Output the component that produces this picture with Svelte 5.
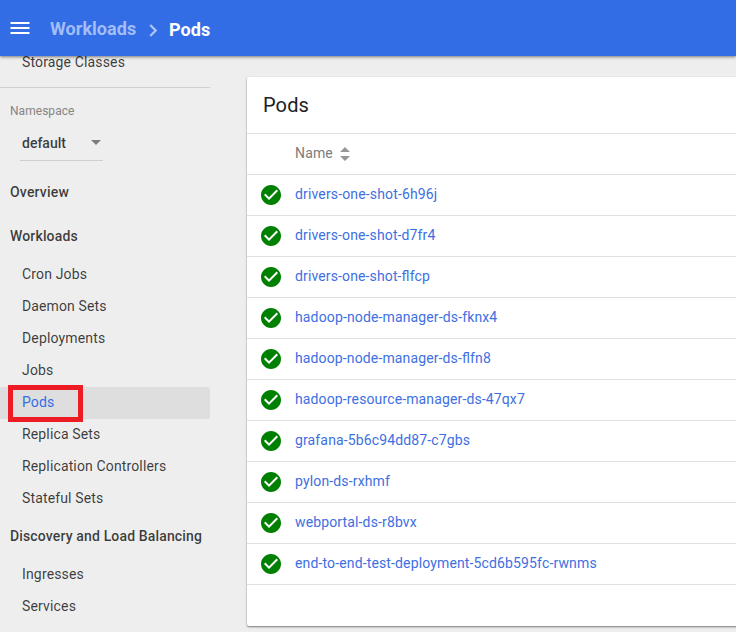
<script>
  const workloads = [
    { label: 'Cron Jobs', ls: 0.16 },
    { label: 'Daemon Sets', ls: 0.12 },
    { label: 'Deployments', ls: 0.16 },
    { label: 'Jobs', ls: 0.16 },
    { label: 'Pods', ls: 0.1 },
    { label: 'Replica Sets', ls: 0.14 },
    { label: 'Replication Controllers', ls: 0.14 },
    { label: 'Stateful Sets', ls: 0.14 }
  ];
  const discovery = [
    { label: 'Ingresses', ls: 0.16 },
    { label: 'Services', ls: 0.16 }
  ];
  const pods = [
    { name: 'drivers-one-shot-6h96j', ls: 0.15 },
    { name: 'drivers-one-shot-d7fr4', ls: 0.13 },
    { name: 'drivers-one-shot-flfcp', ls: 0.13 },
    { name: 'hadoop-node-manager-ds-fknx4', ls: 0.14 },
    { name: 'hadoop-node-manager-ds-flfn8', ls: 0.13 },
    { name: 'hadoop-resource-manager-ds-47qx7', ls: 0.13 },
    { name: 'grafana-5b6c94dd87-c7gbs', ls: 0.14 },
    { name: 'pylon-ds-rxhmf', ls: 0.15 },
    { name: 'webportal-ds-r8bvx', ls: 0.14 },
    { name: 'end-to-end-test-deployment-5cd6b595fc-rwnms', ls: 0.14 }
  ];
</script>

<div class="app">
  <header>
    <svg class="menu" width="20" height="14" viewBox="0 0 20 14"><path d="M.5 0h19v2H.5zM.5 5h19v2H.5zM.5 10h19v2H.5z" fill="#fff" /></svg>
    <span class="crumb">Workloads</span>
    <svg class="chev" width="9" height="13" viewBox="0 0 9 13"><path d="M1.2 1 6.7 6.500l-5.500 5.500" fill="none" stroke="#adc5f7" stroke-width="2.300" /></svg>
    <span class="here">Pods</span>
  </header>
  <div class="body">
    <nav>
      <div class="item storage"><span>Storage Classes</span></div>
      <div class="namespace">
        <div class="label">Namespace</div>
        <div class="select"><span>default</span><i></i></div>
      </div>
      <div class="group overview"><span>Overview</span></div>
      <div class="group works"><span>Workloads</span></div>
      {#each workloads as w}
        <div class="item" class:active={w.label === 'Pods'}><span style="letter-spacing:{w.ls}px">{w.label}</span></div>
      {/each}
      <div class="group disc"><span>Discovery and Load Balancing</span></div>
      {#each discovery as w}
        <div class="item"><span style="letter-spacing:{w.ls}px">{w.label}</span></div>
      {/each}
    </nav>
    <main>
      <section>
        <h1>Pods</h1>
        <div class="row head">
          <span>Name</span>
          <svg width="10" height="14" viewBox="0 0 10 14"><path d="M0 5 5 0l5 5zM0 9h10l-5 5z" fill="#979797" /></svg>
        </div>
        {#each pods as p}
          <div class="row">
            <svg class="ok" width="20" height="20" viewBox="2 2 20 20"><path d="M12 2C6.48 2 2 6.48 2 12s4.480 10 10 10 10-4.480 10-10S17.520 2 12 2zm-2 15l-5-5 1.410-1.410L10 14.170l7.590-7.590L19 8l-9 9z" fill="#008000" /></svg>
            <a href="#pod" style="letter-spacing:{p.ls}px">{p.name}</a>
          </div>
        {/each}
      </section>
    </main>
  </div>
</div>

<style>
  :global(body) { margin: 0; overflow: hidden; }
  .app { width: 736px; height: 632px; overflow: hidden; background: #eee; font-family: Roboto, sans-serif; font-size: 14px; color: rgba(0, 0, 0, 0.76); display: flex; flex-direction: column; }
  header { height: 56px; flex: none; background: #326de6; display: flex; align-items: center; box-sizing: border-box; padding: 0 10px; box-shadow: 0 1px 3px rgba(0, 0, 0, 0.5); position: relative; z-index: 1; font-size: 18px; line-height: 24px; font-weight: 700; }
  .menu { margin-top: 2px; }
  .crumb { margin: 2px 0 0 20px; width: 86px; color: #a3bef6; letter-spacing: 0.05px; }
  .chev { margin: 4px 0 0 13px; }
  .here { margin: 3px 0 0 11px; color: #fff; letter-spacing: 0.1px; }
  .body { display: flex; flex: 1; min-height: 0; }
  nav { width: 210px; flex: none; }
  .item { height: 32px; padding-left: 22px; line-height: 31px; border-radius: 2px; white-space: nowrap; }
  .storage { margin-top: -9px; height: 40px; border-bottom: 1px solid #cfcfcf; border-radius: 0; letter-spacing: 0.15px; }
  .active { background: #dedede; color: #326de6; position: relative; }
  .active::after { content: ''; position: absolute; left: 8px; top: -2px; width: 65px; height: 27px; border: 5px solid #ed1c24; }
  .namespace { padding: 15px 0 0 10px; height: 58px; }
  .label { font-size: 12px; line-height: 16px; color: #858585; letter-spacing: 0.04px; }
  .select { margin: 9px 0 0 10px; width: 81px; height: 32px; border-bottom: 1px solid #cfcfcf; display: flex; align-items: center; justify-content: space-between; padding-left: 2px; font-weight: 500; }
  .select span { margin-top: -2px; }
  .select i { border: 5px solid transparent; border-top: 5px solid #7c7c7c; border-bottom: 0; margin: -4px 2px 0 0; }
  .group { height: 44px; line-height: 44px; padding-left: 10px; font-weight: 500; letter-spacing: 0.15px; white-space: nowrap; }
  .overview { margin-top: 9px; letter-spacing: 0.2px; }
  .works { margin-bottom: 1px; }
  .disc { line-height: 43px; }
  main { flex: 1; min-width: 0; padding: 21px 0 0 37px; }
  section { height: 549px; width: 520px; background: #fff; border-radius: 2px; box-shadow: 0 1px 2px rgba(0, 0, 0, 0.5); }
  h1 { margin: 0; height: 56px; line-height: 56px; padding-left: 16px; font-size: 20px; font-weight: 400; letter-spacing: 0.12px; border-bottom: 1px solid #e0e0e0; color: #212121; }
  .row { height: 40px; border-bottom: 1px solid #e0e0e0; display: flex; align-items: center; padding-left: 14px; }
  .head { padding-left: 48px; color: #7c7c7c; gap: 7px; letter-spacing: 0.15px; }
  .head span { margin-top: -2px; }
  .row a { color: #3e6fe2; text-decoration: none; margin-left: 14px; margin-top: -3px; font-feature-settings: 'liga' 1; }
</style>
